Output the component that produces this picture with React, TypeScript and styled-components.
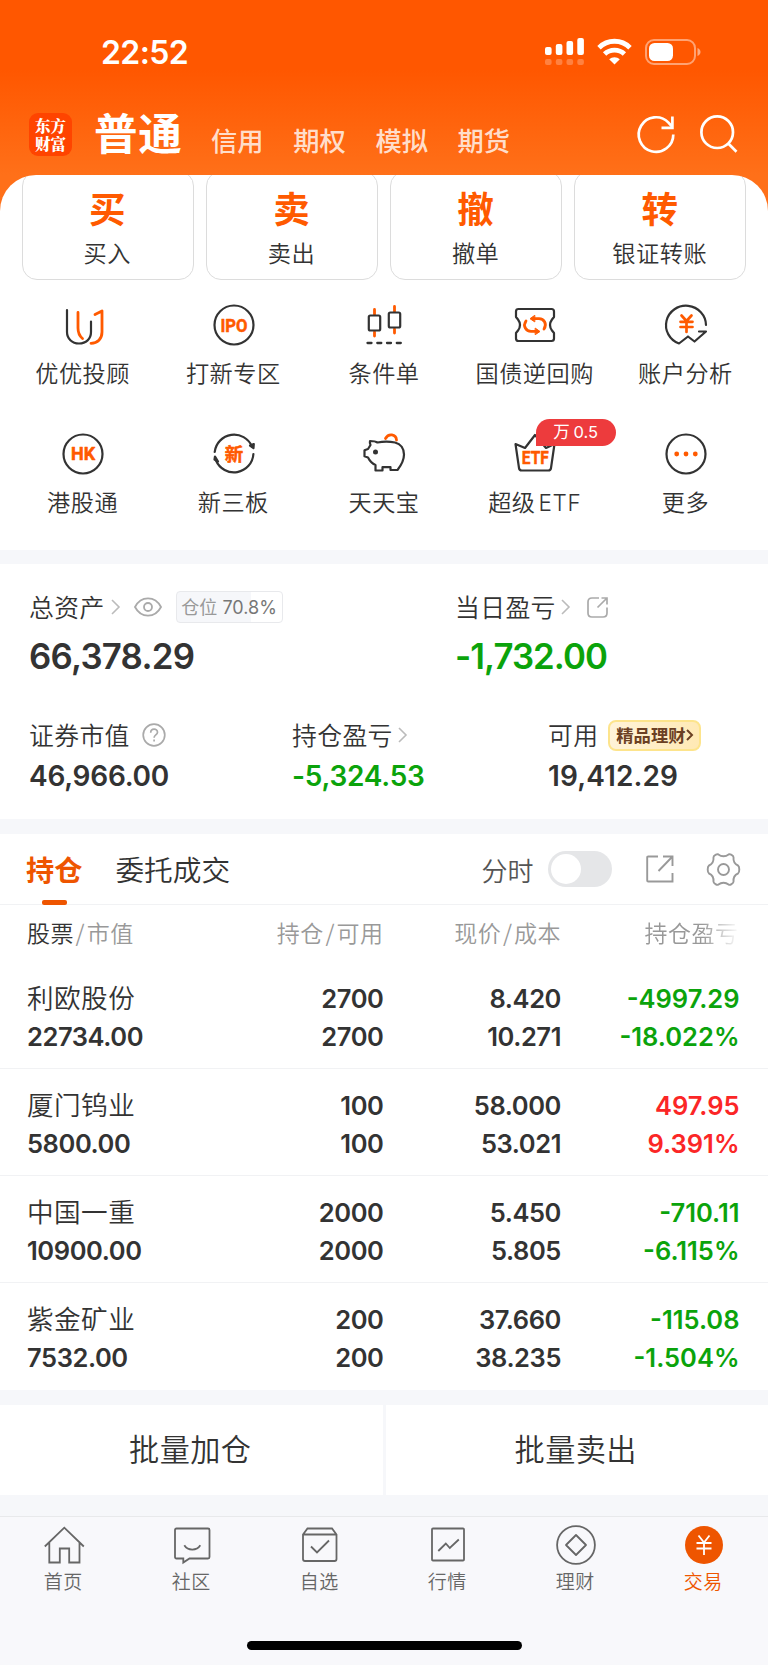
import React from "react";
import styled, { createGlobalStyle } from "styled-components";

const CJK = `"Noto Sans CJK SC"`;
const INK = "#333333";
const ORANGE = "#ff5a00";
const GREEN = "#0ba30b";
const RED = "#fb2626";

const Global = createGlobalStyle`
  * { box-sizing: border-box; }
  body { margin: 0; background: #f6f7fa; }
  svg { display: block; flex: none; overflow: visible; }
`;

const Screen = styled.div`
  width: 768px;
  height: 1665px;
  overflow: hidden;
  display: flex;
  flex-direction: column;
  background: #f6f7fa;
  color: ${INK};
  font-family: Inter, ${CJK}, sans-serif;
  white-space: nowrap;
`;

/* ---------- header ---------- */
const Header = styled.header`
  height: 225px;
  flex: none;
  margin-bottom: -50px;
  background: linear-gradient(#ff5700 0, #ff5700 70px, #ff7019 175px);
  color: #fff;
`;
const StatusBar = styled.div`
  height: 103px;
  display: flex;
  align-items: center;
  padding: 0 67px 0 101px;
`;
const Clock = styled.div`
  flex: 1;
  font-size: 32px;
  font-weight: 600;
  letter-spacing: -0.6px;
  line-height: 40px;
  padding-top: 3px;
`;
const StatusIcons = styled.div`
  display: flex;
  align-items: center;
`;
const NavBar = styled.nav`
  display: flex;
  align-items: center;
  height: 62px;
  padding: 0 30px 0 29px;
`;
const Logo = styled.div`
  width: 43px;
  height: 43px;
  border-radius: 9px;
  background: #ff4400;
  display: flex;
  flex-direction: column;
  align-items: center;
  font: 900 15.5px/18px "Noto Serif CJK SC", ${CJK}, serif;
  padding-top: 3px;
`;
const NavTitle = styled.div`
  margin-left: 22px;
  width: 117px;
  height: 60px;
  font: 700 43.5px/56px ${CJK}, sans-serif;
  letter-spacing: 0.8px;
`;
const NavItem = styled.div`
  width: 82.2px;
  padding-top: 11px;
  font: 500 26.3px/40px ${CJK}, sans-serif;
  color: rgba(255, 255, 255, 0.8);
`;
const NavActions = styled.div`
  display: flex;
  gap: 25px;
  margin-left: auto;
`;

/* ---------- action panel ---------- */
const Panel = styled.section`
  height: 375px;
  flex: none;
  background: #fff;
  border-radius: 36px 36px 0 0;
  overflow: hidden;
`;
const Cards = styled.div`
  display: grid;
  grid-template-columns: repeat(4, 1fr);
  gap: 12.6px;
  padding: 0 22px;
  margin-top: -4px;
`;
const Card = styled.div`
  height: 109px;
  border: 1.5px solid #dcdcdc;
  border-radius: 15px;
  display: flex;
  flex-direction: column;
  align-items: center;
  padding: 17px 1px 0 0;
`;
const CardGlyph = styled.div`
  font: 700 36.5px/38px ${CJK}, sans-serif;
  color: ${ORANGE};
`;
const CardLabel = styled.div`
  margin-top: 8px;
  font: 350 23.2px/34px ${CJK}, sans-serif;
  letter-spacing: 0.5px;
`;
const Shortcuts = styled.div`
  display: grid;
  grid-template-columns: repeat(5, 1fr);
  grid-auto-rows: 129px;
  padding: 0 7px 0 7.5px;
  margin-top: 19px;
`;
const Shortcut = styled.div`
  position: relative;
  display: flex;
  flex-direction: column;
  align-items: center;
  padding-top: 4.5px;
`;
const ShortcutLabel = styled.div`
  margin-top: 9.5px;
  padding-right: 0.5px;
  font: 350 23.2px/34px ${CJK}, sans-serif;
  letter-spacing: 0.5px;
`;
const Latin = styled.span`
  margin-left: 3px;
  font-family: Inter, sans-serif;
  font-size: 22.5px;
  letter-spacing: 0.6px;
`;
const Promo = styled.div`
  position: absolute;
  left: 76px;
  top: -9px;
  width: 80px;
  height: 27px;
  border-radius: 14px 14px 14px 0;
  background: #ed3b3d;
  color: #fff;
  text-align: center;
  font: 400 16.5px/27px Inter, ${CJK}, sans-serif;
  word-spacing: -1px;
`;

/* ---------- assets ---------- */
const Assets = styled.section`
  height: 255px;
  flex: none;
  margin-top: 14px;
  padding: 26px 29px 0;
  background: #fff;
`;
const AssetRow = styled.div<{ $cols: string; $top?: number }>`
  display: grid;
  grid-template-columns: ${(p) => p.$cols};
  margin-top: ${(p) => p.$top ?? 0}px;
`;
const AssetHead = styled.div`
  height: 34px;
  display: flex;
  align-items: center;
  font: 350 24.8px/34px ${CJK}, sans-serif;
  letter-spacing: 0.4px;
`;
const Label = styled.span`
  line-height: 32px;
  height: 34px;
`;
const Spacer = styled.span<{ $w: number }>`
  width: ${(p) => p.$w}px;
  flex: none;
`;
const BigValue = styled.div<{ $color?: string; $tracking?: number }>`
  margin-top: 10px;
  font-size: 34.8px;
  line-height: 44px;
  font-weight: 600;
  letter-spacing: ${(p) => p.$tracking ?? 0}px;
  color: ${(p) => p.$color ?? INK};
`;
const MidValue = styled.div<{ $color?: string; $tracking?: number }>`
  margin-top: 6px;
  font-size: 28px;
  line-height: 36px;
  font-weight: 600;
  letter-spacing: ${(p) => p.$tracking ?? 0}px;
  color: ${(p) => p.$color ?? INK};
`;
const Ratio = styled.div`
  width: 107px;
  height: 32px;
  border: 1.5px solid #e8e9ec;
  border-radius: 4px;
  background: linear-gradient(90deg, #f6f7fa 70.8%, #fff 70.8%);
  color: #999;
  text-align: center;
  font: 400 18px/31px Inter, ${CJK}, sans-serif;
  letter-spacing: 0;
  b { font-weight: 400; color: #777; }
`;
const WealthTag = styled.div`
  width: 93px;
  height: 31px;
  display: flex;
  align-items: center;
  justify-content: center;
  gap: 1px;
  border: 2px solid #fde48c;
  border-radius: 8px;
  background: linear-gradient(100deg, #fff3d9, #ffe9b4);
  color: #6b4023;
  font: 700 17.3px/26px ${CJK}, sans-serif;
  letter-spacing: 0;
`;

/* ---------- holdings ---------- */
const Holdings = styled.section`
  height: 556px;
  flex: none;
  margin-top: 15px;
  background: #fff;
`;
const Tabs = styled.div`
  display: flex;
  align-items: center;
  height: 71px;
  padding: 0 28.5px 0 26px;
  border-bottom: 1px solid #f1f2f4;
`;
const Tab = styled.div<{ $active?: boolean }>`
  position: relative;
  height: 70px;
  margin-right: 33px;
  font: ${(p) => (p.$active ? 700 : 350)} ${(p) => (p.$active ? 28.2 : 28.7)}px/69px ${CJK}, sans-serif;
  color: ${(p) => (p.$active ? "#ee5500" : INK)};
  &::after {
    content: "";
    display: ${(p) => (p.$active ? "block" : "none")};
    position: absolute;
    left: 16px;
    bottom: -1px;
    width: 25px;
    height: 5px;
    border-radius: 2px;
    background: #ee5500;
  }
`;
const Minute = styled.div`
  margin-left: auto;
  font: 350 26px/69px ${CJK}, sans-serif;
  color: #555;
`;
const Toggle = styled.div`
  width: 64px;
  height: 36px;
  margin: 0 34px 0 14px;
  padding: 3px;
  border-radius: 18px;
  background: #e5e6e8;
  &::after {
    content: "";
    display: block;
    width: 30px;
    height: 30px;
    border-radius: 50%;
    background: #fff;
  }
`;
const Grid = styled.div`
  display: grid;
  grid-template-columns: 180px 176.5px 177.5px 178.5px;
  padding: 0 28px 0 27px;
`;
const HeadRow = styled(Grid)`
  height: 57px;
  font: 350 23px/55px ${CJK}, sans-serif;
  letter-spacing: 0.5px;
  color: #999;
  i { font-style: normal; padding: 0 1.6px; }
  b { font-weight: 350; color: ${INK}; }
`;
const Cell = styled.div<{ $left?: boolean }>`
  text-align: ${(p) => (p.$left ? "left" : "right")};
`;
const FadeCell = styled.div`
  margin-left: 83.5px;
  overflow: hidden;
  mask-image: linear-gradient(90deg, #000 60%, transparent 100%);
`;
const Row = styled(Grid)`
  height: 107px;
  padding-top: 17.5px;
  border-bottom: 1px solid #f1f2f4;
  font-size: 25.5px;
  font-weight: 600;
  line-height: 38.7px;
  &:last-child { border-bottom: 0; }
`;
const Stack = styled(Cell)<{ $color?: string; $tracking?: number }>`
  letter-spacing: ${(p) => p.$tracking ?? -0.42}px;
  color: ${(p) => p.$color ?? INK};
`;
const Name = styled.div`
  height: 38.7px;
  font: 350 26.6px/34.5px ${CJK}, sans-serif;
  letter-spacing: 0.45px;
`;

/* ---------- bottom ---------- */
const Batch = styled.div`
  height: 90px;
  flex: none;
  margin-top: 15px;
  display: grid;
  grid-template-columns: 1fr 1fr;
  gap: 3px;
`;
const BatchButton = styled.div`
  background: #fff;
  padding-right: 2px;
  text-align: center;
  font: 350 30.2px/87px ${CJK}, sans-serif;
  letter-spacing: 0.4px;
`;
const TabBar = styled.footer`
  flex: 1;
  margin-top: 21px;
  border-top: 1px solid #e8e9eb;
  background: #f8f8fb;
  display: flex;
  flex-direction: column;
  align-items: center;
`;
const TabItems = styled.div`
  width: 100%;
  height: 124px;
  display: grid;
  grid-template-columns: repeat(6, 1fr);
`;
const TabItem = styled.div<{ $active?: boolean }>`
  display: flex;
  flex-direction: column;
  align-items: center;
  padding-top: 8px;
  color: ${(p) => (p.$active ? "#ee5500" : "#666")};
`;
const TabLabel = styled.div`
  margin-top: 2px;
  padding-right: 1.5px;
  font: 350 19px/28px ${CJK}, sans-serif;
  letter-spacing: 0.4px;
`;
const HomeIndicator = styled.div`
  width: 275px;
  height: 9px;
  border-radius: 5px;
  background: #000;
`;

/* ---------- icons ---------- */
const Signal = () => (
  <svg width="40" height="28" viewBox="0 0 40 28" fill="#fff">
    {[[0, 9, 8], [10.8, 6, 11], [21.5, 3, 14], [32.3, 0, 17]].map(([x, y, h]) => (
      <g key={x}>
        <rect x={x} y={y} width="6.6" height={h} rx="2" />
        <rect x={x} y="21" width="6.6" height="6" rx="2" opacity=".25" />
      </g>
    ))}
  </svg>
);
const Wifi = () => (
  <svg width="35" height="26" viewBox="0 0 35 26" fill="none" stroke="#fff" strokeWidth="4.8">
    <path d="M2 8.700C10.500.1 24.500.1 33 8.700" />
    <path d="M7.600 15c5.500-5.300 14.300-5.300 19.800 0" />
    <path d="M17.500 25.500l-5.300-5.200c3-2.800 7.600-2.800 10.600 0z" fill="#fff" stroke="none" />
  </svg>
);
const Battery = () => (
  <svg width="56" height="26" viewBox="0 0 56 26" fill="none">
    <rect x="1" y="1" width="49" height="24" rx="8" stroke="#fff" strokeOpacity=".45" strokeWidth="2" />
    <rect x="4" y="4" width="24" height="18" rx="5.500" fill="#fff" />
    <path d="M52.500 9c4 1.500 4 6.500 0 8z" fill="#fff" fillOpacity=".5" />
  </svg>
);
const Refresh = () => (
  <svg width="38" height="38" viewBox="0 0 38 38" fill="none" stroke="#fff" strokeWidth="2.700">
    <path d="M36.300 19.500A17.300 17.300 0 1 1 31.500 7.600l3.500 4" />
    <path d="M35.400 1.500v11.300H24.500" />
  </svg>
);
const Search = () => (
  <svg width="38" height="38" viewBox="0 0 38 38" fill="none" stroke="#fff" strokeWidth="2.700">
    <circle cx="17.200" cy="17.200" r="15.800" />
    <path d="M28.300 28.500l8.200 8.200" />
  </svg>
);

const iconProps = {
  width: 42, height: 42, viewBox: "0 0 42 42", fill: "none", stroke: INK, strokeWidth: 2.2,
  strokeLinecap: "round" as const, strokeLinejoin: "round" as const,
};
const IconText = styled.text`
  font-family: Roboto, ${CJK}, sans-serif;
  font-weight: 700;
  fill: ${ORANGE};
  stroke: ${ORANGE};
  stroke-width: 0.5px;
  text-anchor: middle;
`;
const Advisor = () => (
  <svg {...iconProps}>
    <path d="M5 6v22c0 6.500 5 11.500 12 11.500S29 35 29 28V17.500" />
    <path d="M16 8.500V24c0 5 1.500 8 4.500 10.500" stroke={ORANGE} strokeWidth="2.800" />
    <path d="M33 10.500l7-3.500v21c0 7-4.500 11.300-11 11.300" stroke={ORANGE} strokeWidth="2.800" />
  </svg>
);
const Ipo = () => (
  <svg {...iconProps}>
    <circle cx="21" cy="21" r="19.500" />
    <IconText x="21" y="27.500" fontSize="18.500" textLength="27" lengthAdjust="spacingAndGlyphs">IPO</IconText>
  </svg>
);
const Candles = () => (
  <svg {...iconProps}>
    <g stroke={ORANGE} strokeWidth="2.800">
      <path d="M11.500 5.500v5M11.500 28v4M31.500 2.500v5M31.500 25v4" />
    </g>
    <rect x="5.800" y="11.500" width="11.400" height="15" rx="1.500" />
    <rect x="25.800" y="8.500" width="11.400" height="15" rx="1.500" />
    <path d="M4.500 39h4M14.300 39h4M24 39h4M33.800 39h4" strokeWidth="2.300" />
  </svg>
);
const Repo = () => (
  <svg {...iconProps}>
    <path d="M4.500 5h33q2.500 0 2.500 2.500v5.500l-2 2.500q-4 5.500 0 11l2 2.500v5.500q0 2.500-2.500 2.500h-33Q2 37 2 34.500V29l2-2.500q4-5.500 0-11L2 13V7.500Q2 5 4.500 5z" />
    <g stroke={ORANGE} strokeWidth="2.800">
      <path d="M12 17c-3.500 5 0 10.300 5 10.300h5M30 25c3.500-5 0-10.300-5-10.300h-5" />
      <path d="M20.500 11.500l-4.500 3.200 4.500 3zM21.500 24.300l4.500 3.200-4.500 3z" fill={ORANGE} strokeWidth="1" />
    </g>
  </svg>
);
const Analysis = () => (
  <svg {...iconProps}>
    <path d="M41 21A20 19.500 0 1 0 14 39.500l9-7 6.500 5L41 27.500h-7" />
    <path d="M16.500 11.500l5 5.500 5-5.500M15.500 17.800h12M15.500 23h12M21.500 17.500V28" stroke={ORANGE} strokeWidth="2.700" />
  </svg>
);
const HkConnect = () => (
  <svg {...iconProps}>
    <circle cx="21" cy="21" r="19.500" />
    <IconText x="21" y="27.200" fontSize="18">HK</IconText>
  </svg>
);
const NewBoard = () => (
  <svg {...iconProps}>
    <path d="M1.700 19A19.500 19.500 0 0 1 39 13.500M40.400 21A19.500 19.500 0 0 1 3 27.500" />
    <path d="M37 12.500l3.500 2.500.300-4zM5 28.500l-3.500-2 .500-3z" fill={INK} />
    <IconText x="21" y="27.800" fontSize="18.500">新</IconText>
  </svg>
);
const Piggy = () => (
  <svg {...iconProps}>
    <path d="M22.500 5.500c3-5.500 10.500-4.500 11 1.500" stroke={ORANGE} strokeWidth="2.800" />
    <path d="M14.500 9.500C22 8 27 8.500 32 9.500c6 1.500 9 6.500 9 12 0 6-3 11-6.500 15.500h-7v-2.800h-8V37.500h-7V32C8 30 6.500 27.500 5 24.500l-3.500-1.200v-6L5 16l2.500-4c-1-2-.5-4-.5-4 4 0 6 .5 7.500 1.500z" />
    <circle cx="12.500" cy="19" r="1.400" fill={INK} />
  </svg>
);
const EtfCrown = () => (
  <svg {...iconProps}>
    <path d="M1.500 11l9.500 4L21 2l11 13 8.500-4L37 35q-.3 2.500-2.800 2.500H7.800Q5.300 37.500 5 35z" />
    <IconText x="21.300" y="31" fontSize="19" textLength="27" lengthAdjust="spacingAndGlyphs">ETF</IconText>
  </svg>
);
const More = () => (
  <svg {...iconProps}>
    <circle cx="21" cy="21" r="19.500" />
    <g fill={ORANGE} stroke="none">
      <circle cx="11.700" cy="21" r="2.400" />
      <circle cx="21" cy="21" r="2.400" />
      <circle cx="30.300" cy="21" r="2.400" />
    </g>
  </svg>
);

const Chevron = () => (
  <svg width="10" height="16" viewBox="0 0 10 16" fill="none" stroke="#bbb" strokeWidth="1.600">
    <path d="M1 1l7 7-7 7" />
  </svg>
);
const Eye = () => (
  <svg width="28" height="20" viewBox="0 0 28 20" fill="none" stroke="#aaa" strokeWidth="1.800">
    <path d="M1 10C7-1.500 21-1.500 27 10 21 21.500 7 21.500 1 10z" />
    <circle cx="14" cy="10" r="4" />
  </svg>
);
const RoundShare = () => (
  <svg width="22" height="21" viewBox="0 0 22 21" fill="none" stroke="#aaa" strokeWidth="1.700">
    <path d="M12 1H5Q1 1 1 5v11q0 4 4 4h11q4 0 4-4v-5.500" />
    <path d="M14.500 1h5.500v6.500M20 1l-9.500 9.500" />
  </svg>
);
const Share = () => (
  <svg width="28" height="28" viewBox="0 0 28 28" fill="none" stroke="#999" strokeWidth="1.900">
    <path d="M12 1.500H2.200q-1 0-1 1v23q0 1 1 1h24.300V18" />
    <path d="M17 1.500h9.500V11M26.500 1.500L12.500 16" />
  </svg>
);
const Help = () => (
  <svg width="24" height="24" viewBox="0 0 24 24" fill="none" stroke="#aaa" strokeWidth="1.700">
    <circle cx="12" cy="12" r="10.800" />
    <path d="M8.700 9.700c0-4.700 6.800-4.500 6.800-.5 0 2.800-3.400 2.700-3.400 5.500M12.100 16.500v2" />
  </svg>
);
const Gear = () => (
  <svg width="33" height="33" viewBox="0 0 33 33" fill="none" stroke="#999" strokeWidth="1.900" strokeLinejoin="round">
    <path d="M22 1.200q1-.3 2.500.7 2 1.200 2 2.300Q26 10.500 31 12.500q1.300 1 1.300 4t-1.300 4Q26 22.500 26.500 28.800q0 1.100-2 2.300-1.500 1-2.500.7Q16.500 27.500 11 31.800q-1 .3-2.500-.7-2-1.200-2-2.300Q7 22.500 2 20.500.7 19.500.7 16.500t1.300-4Q7 10.500 6.500 4.200q0-1.100 2-2.300 1.500-1 2.500-.7Q16.500 5.500 22 1.200z" />
    <circle cx="16.500" cy="16.500" r="5.500" />
  </svg>
);

const tabProps = { width: 40, height: 40, viewBox: "0 0 40 40", fill: "none", stroke: "currentColor", strokeWidth: 1.8 };
const Home = () => (
  <svg {...tabProps}>
    <path d="M.8 21.500L20.300 2.700l19.500 18.800M5.300 17.500V37.500h10.500V23.500h9.400v14h10.300v-20" />
  </svg>
);
const Community = () => (
  <svg {...tabProps}>
    <path d="M4.500 3.500h31.500q1.500 0 1.500 1.500v27q0 1.500-1.500 1.500H17.500L11.300 37.500v-4H4.500Q3 33.500 3 32V5q0-1.500 1.500-1.500z" />
    <path d="M12.300 20.300c3.500 5.700 12.500 5.700 16 0" />
  </svg>
);
const Watchlist = () => (
  <svg {...tabProps}>
    <path d="M3 9.500L7.500 3.500h24.500L36.500 9.500V34q0 2-2 2H5q-2 0-2-2zM3 9.500h33.500" />
    <path d="M11 21.500l6 6 12-12" />
  </svg>
);
const Market = () => (
  <svg {...tabProps}>
    <rect x="4" y="3.500" width="32" height="32" rx="1" />
    <path d="M10.300 26l7.500-7.500 4 4.500 9-8.500" />
  </svg>
);
const Wealth = () => (
  <svg {...tabProps}>
    <circle cx="20" cy="20" r="18.900" />
    <path d="M20 10l10 10-10 10-10-10z" strokeLinejoin="round" />
  </svg>
);
const Trade = () => (
  <svg {...tabProps}>
    <circle cx="20" cy="20" r="19" fill="#ee5500" stroke="none" />
    <path d="M14.500 10.500l5.500 7 5.500-7M12.500 18h15M12.500 23.500h15M20 17.500V30" stroke="#fff" />
  </svg>
);

/* ---------- data ---------- */
const cards = [["买", "买入"], ["卖", "卖出"], ["撤", "撤单"], ["转", "银证转账"]];
const shortcuts: { Icon: React.FC; label: React.ReactNode; promo?: string }[] = [
  { Icon: Advisor, label: "优优投顾" },
  { Icon: Ipo, label: "打新专区" },
  { Icon: Candles, label: "条件单" },
  { Icon: Repo, label: "国债逆回购" },
  { Icon: Analysis, label: "账户分析" },
  { Icon: HkConnect, label: "港股通" },
  { Icon: NewBoard, label: "新三板" },
  { Icon: Piggy, label: "天天宝" },
  { Icon: EtfCrown, label: <>超级<Latin>ETF</Latin></>, promo: "万 0.5" },
  { Icon: More, label: "更多" },
];
const holdings = [
  { name: "利欧股份", value: "22734.00", qty: "2700", price: "8.420", cost: "10.271", pnl: "-4997.29", pct: "-18.022%" },
  { name: "厦门钨业", value: "5800.00", qty: "100", price: "58.000", cost: "53.021", pnl: "497.95", pct: "9.391%" },
  { name: "中国一重", value: "10900.00", qty: "2000", price: "5.450", cost: "5.805", pnl: "-710.11", pct: "-6.115%" },
  { name: "紫金矿业", value: "7532.00", qty: "200", price: "37.660", cost: "38.235", pnl: "-115.08", pct: "-1.504%" },
];
const tabs: [React.FC, string][] = [
  [Home, "首页"], [Community, "社区"], [Watchlist, "自选"], [Market, "行情"], [Wealth, "理财"], [Trade, "交易"],
];

export default function App() {
  return (
    <Screen>
      <Global />
      <Header>
        <StatusBar>
          <Clock>22:52</Clock>
          <StatusIcons>
            <Signal />
            <Spacer $w={12} />
            <Wifi />
            <Spacer $w={13} />
            <Battery />
          </StatusIcons>
        </StatusBar>
        <NavBar>
          <Logo><span>东方</span><span>财富</span></Logo>
          <NavTitle>普通</NavTitle>
          {["信用", "期权", "模拟", "期货"].map((t) => <NavItem key={t}>{t}</NavItem>)}
          <NavActions><Refresh /><Search /></NavActions>
        </NavBar>
      </Header>

      <Panel>
        <Cards>
          {cards.map(([g, t]) => (
            <Card key={g}><CardGlyph>{g}</CardGlyph><CardLabel>{t}</CardLabel></Card>
          ))}
        </Cards>
        <Shortcuts>
          {shortcuts.map(({ Icon, label, promo }, i) => (
            <Shortcut key={i}>
              <Icon />
              {promo && <Promo>{promo}</Promo>}
              <ShortcutLabel>{label}</ShortcutLabel>
            </Shortcut>
          ))}
        </Shortcuts>
      </Panel>

      <Assets>
        <AssetRow $cols="426px 1fr">
          <div>
            <AssetHead>
              <Label>总资产</Label><Spacer $w={6} /><Chevron /><Spacer $w={13} /><Eye /><Spacer $w={14} />
              <Ratio>仓位 <b>70.8%</b></Ratio>
            </AssetHead>
            <BigValue $tracking={-0.75}>66,378.29</BigValue>
          </div>
          <div>
            <AssetHead>
              <Label>当日盈亏</Label><Spacer $w={5} /><Chevron /><Spacer $w={16} />
              <RoundShare />
            </AssetHead>
            <BigValue $color={GREEN} $tracking={-0.95}>-1,732.00</BigValue>
          </div>
        </AssetRow>
        <AssetRow $cols="263px 256px 1fr" $top={40}>
          <div>
            <AssetHead><Label>证券市值</Label><Spacer $w={12} /><Help /></AssetHead>
            <MidValue $tracking={-0.25}>46,966.00</MidValue>
          </div>
          <div>
            <AssetHead><Label>持仓盈亏</Label><Spacer $w={5} /><Chevron /></AssetHead>
            <MidValue $color={GREEN} $tracking={-0.25}>-5,324.53</MidValue>
          </div>
          <div>
            <AssetHead>
              <Label>可用</Label><Spacer $w={10} />
              <WealthTag>
                精品理财
                <svg width="7" height="12" viewBox="0 0 7 12" fill="none" stroke="#6b4023" strokeWidth="2">
                  <path d="M1 1l5 5-5 5" />
                </svg>
              </WealthTag>
            </AssetHead>
            <MidValue $tracking={0.1}>19,412.29</MidValue>
          </div>
        </AssetRow>
      </Assets>

      <Holdings>
        <Tabs>
          <Tab $active>持仓</Tab>
          <Tab>委托成交</Tab>
          <Minute>分时</Minute>
          <Toggle />
          <Share />
          <Spacer $w={33} />
          <Gear />
        </Tabs>
        <HeadRow>
          <Cell $left><b>股票</b><i>/</i>市值</Cell>
          <Cell>持仓<i>/</i>可用</Cell>
          <Cell>现价<i>/</i>成本</Cell>
          <FadeCell>持仓盈亏</FadeCell>
        </HeadRow>
        {holdings.map((h) => (
          <Row key={h.name}>
            <Stack $left><Name>{h.name}</Name>{h.value}</Stack>
            <Stack>{h.qty}<br />{h.qty}</Stack>
            <Stack>{h.price}<br />{h.cost}</Stack>
            <Stack $color={h.pnl.startsWith("-") ? GREEN : RED} $tracking={0}>{h.pnl}<br />{h.pct}</Stack>
          </Row>
        ))}
      </Holdings>

      <Batch>
        <BatchButton>批量加仓</BatchButton>
        <BatchButton>批量卖出</BatchButton>
      </Batch>

      <TabBar>
        <TabItems>
          {tabs.map(([Icon, t], i) => (
            <TabItem key={t} $active={i === 5}><Icon /><TabLabel>{t}</TabLabel></TabItem>
          ))}
        </TabItems>
        <HomeIndicator />
      </TabBar>
    </Screen>
  );
}
